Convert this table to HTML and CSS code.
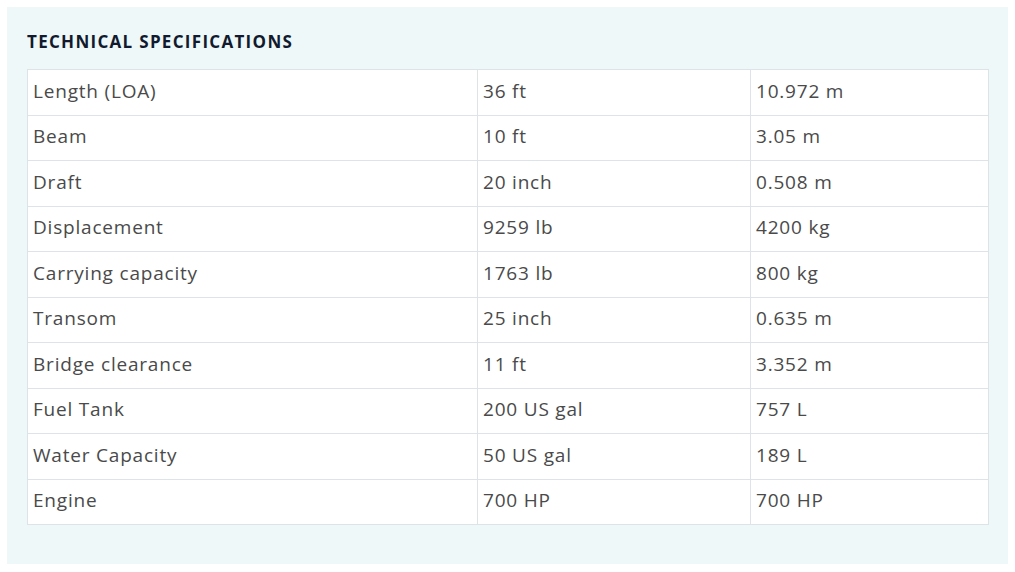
FILE: index.html
```html
<!DOCTYPE html>
<html>
<head>
<meta charset="utf-8">
<link rel="stylesheet" href="styles.css">
</head>
<body>
<section class="panel">
  <h2 class="title">TECHNICAL SPECIFICATIONS</h2>
  <table class="specs">
    <colgroup><col class="c1"><col class="c2"><col class="c3"></colgroup>
    <tbody>
      <tr><td>Length (LOA)</td><td>36 ft</td><td>10.972 m</td></tr>
      <tr><td>Beam</td><td>10 ft</td><td>3.05 m</td></tr>
      <tr><td>Draft</td><td>20 inch</td><td>0.508 m</td></tr>
      <tr><td>Displacement</td><td>9259 lb</td><td>4200 kg</td></tr>
      <tr><td>Carrying capacity</td><td>1763 lb</td><td>800 kg</td></tr>
      <tr><td>Transom</td><td>25 inch</td><td>0.635 m</td></tr>
      <tr><td>Bridge clearance</td><td>11 ft</td><td>3.352 m</td></tr>
      <tr><td>Fuel Tank</td><td>200 US gal</td><td>757 L</td></tr>
      <tr><td>Water Capacity</td><td>50 US gal</td><td>189 L</td></tr>
      <tr><td>Engine</td><td>700 HP</td><td>700 HP</td></tr>
    </tbody>
  </table>
</section>
</body>
</html>
```
FILE: styles.css
```css
html, body { margin: 0; padding: 0; background: #ffffff; }
body { padding: 7px; }
.panel {
  background: #eef8f8;
  width: 1001px;
  height: 557px;
  box-sizing: border-box;
  padding: 23px 20px 0 20px;
  font-family: "Open Sans", "Lato", sans-serif;
}
.title {
  margin: 0 0 19px 0;
  font-size: 17px;
  font-weight: 700;
  letter-spacing: 1.3px;
  color: #111a2e;
  line-height: 24px;
  height: 20px;
}
.specs {
  width: 961px;
  border-collapse: collapse;
  background: #ffffff;
  table-layout: fixed;
}
.c1 { width: 450px; }
.c2 { width: 273px; }
.c3 { width: 238px; }
.specs td {
  border: 1px solid #dde3e7;
  height: 45.5px;
  box-sizing: border-box;
  padding: 0 6px 3px 5px;
  font-size: 19px;
  line-height: 24px;
  color: #4a4a4a;
  vertical-align: middle;
  letter-spacing: 0.8px;
}
```
